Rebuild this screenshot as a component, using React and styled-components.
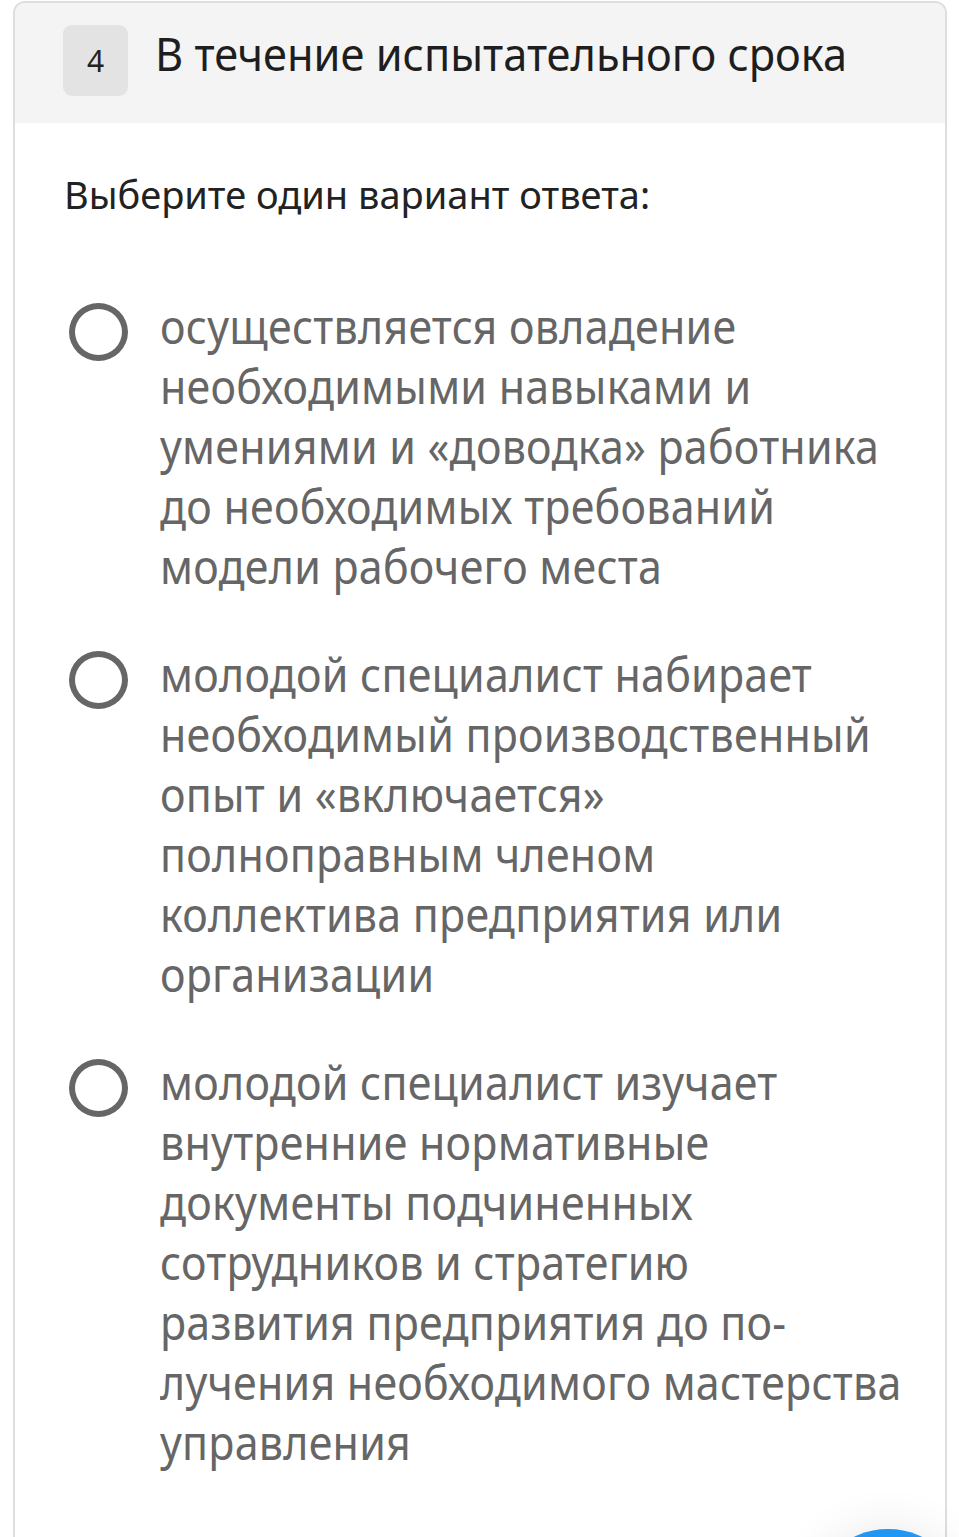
import React from "react";
import styled, { createGlobalStyle } from "styled-components";

const Global = createGlobalStyle`
  html, body { margin: 0; padding: 0; background: #fff; }
  body { font-family: "Noto Sans", "Open Sans", sans-serif; overflow: hidden; height: 1537px; }
`;

const Page = styled.div`
  position: relative;
  height: 1537px;
  overflow: hidden;
  padding: 1px 12px 0 13px;
`;

const Card = styled.div`
  border: 2px solid #dedede;
  border-radius: 12px;
  overflow: hidden;
  height: 1560px;
  background: #fff;
`;

const Header = styled.div`
  display: flex;
  align-items: center;
  gap: 27px;
  background: #f4f4f4;
  height: 120px;
  padding: 0 0 0 48px;
  box-sizing: border-box;
`;

const Badge = styled.div`
  flex: none;
  width: 65px;
  height: 71px;
  border-radius: 9px;
  background: #e3e3e3;
  display: flex;
  align-items: center;
  justify-content: center;
  font-size: 30px;
  color: #222;
  margin-top: -5px;
`;

const Title = styled.div`
  font-size: 46px;
  color: #1e1e1e;
  margin-top: -20px;
  white-space: nowrap;
  transform: scaleX(0.942);
  transform-origin: left center;
`;

const Body = styled.div`
  padding: 46px 40px 0 49px;
`;

const Prompt = styled.div`
  font-size: 38px;
  color: #222;
  line-height: 50px;
  margin-bottom: 77px;
`;

const Options = styled.div`
  display: flex;
  flex-direction: column;
  gap: 48px;
`;

const Option = styled.label`
  display: flex;
  align-items: flex-start;
  gap: 32px;
  padding-left: 5px;
`;

const Radio = styled.span`
  flex: none;
  width: 47px;
  height: 46px;
  border: 6px solid #666;
  border-radius: 50%;
  margin-top: 7px;
`;

const OptionText = styled.div`
  font-size: 48px;
  line-height: 60px;
  letter-spacing: 0.25px;
  color: #666;
  white-space: nowrap;
  min-width: 0;
  flex: 1;
`;

const Line = styled.span`
  display: block;
  transform: scaleX(0.895);
  transform-origin: left center;
`;

const Fab = styled.div`
  position: absolute;
  left: 810px;
  top: 1529px;
  width: 156px;
  height: 156px;
  border-radius: 50%;
  background: #2196f3;
  box-shadow: 0 0 40px 10px rgba(0, 0, 0, 0.06);
`;

const options = [
  [
    "осуществляется овладение",
    "необходимыми навыками и",
    "умениями и «доводка» работника",
    "до необходимых требований",
    "модели рабочего места",
  ],
  [
    "молодой специалист набирает",
    "необходимый производственный",
    "опыт и «включается»",
    "полноправным членом",
    "коллектива предприятия или",
    "организации",
  ],
  [
    "молодой специалист изучает",
    "внутренние нормативные",
    "документы подчиненных",
    "сотрудников и стратегию",
    "развития предприятия до по-",
    "лучения необходимого мастерства",
    "управления",
  ],
];

export default function App() {
  return (
    <>
      <Global />
      <Page>
        <Card>
          <Header>
            <Badge>4</Badge>
            <Title>В течение испытательного срока</Title>
          </Header>
          <Body>
            <Prompt>Выберите один вариант ответа:</Prompt>
            <Options>
              {options.map((lines, i) => (
                <Option key={i}>
                  <Radio />
                  <OptionText>
                    {lines.map((l, j) => (
                      <Line key={j}>{l}</Line>
                    ))}
                  </OptionText>
                </Option>
              ))}
            </Options>
          </Body>
        </Card>
        <Fab />
      </Page>
    </>
  );
}
